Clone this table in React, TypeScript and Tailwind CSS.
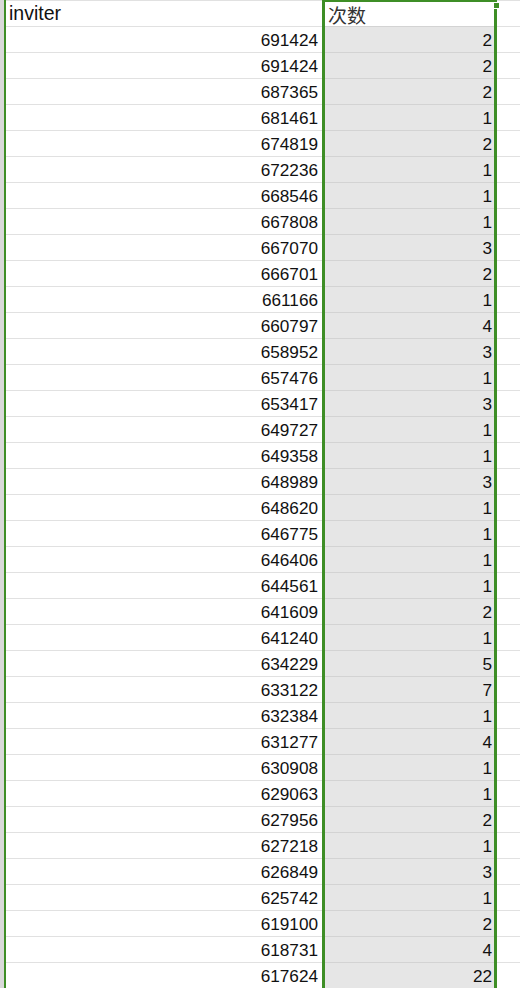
import React from "react";

const rows: [string, string][] = [
  ["691424", "2"],
  ["691424", "2"],
  ["687365", "2"],
  ["681461", "1"],
  ["674819", "2"],
  ["672236", "1"],
  ["668546", "1"],
  ["667808", "1"],
  ["667070", "3"],
  ["666701", "2"],
  ["661166", "1"],
  ["660797", "4"],
  ["658952", "3"],
  ["657476", "1"],
  ["653417", "3"],
  ["649727", "1"],
  ["649358", "1"],
  ["648989", "3"],
  ["648620", "1"],
  ["646775", "1"],
  ["646406", "1"],
  ["644561", "1"],
  ["641609", "2"],
  ["641240", "1"],
  ["634229", "5"],
  ["633122", "7"],
  ["632384", "1"],
  ["631277", "4"],
  ["630908", "1"],
  ["629063", "1"],
  ["627956", "2"],
  ["627218", "1"],
  ["626849", "3"],
  ["625742", "1"],
  ["619100", "2"],
  ["618731", "4"],
  ["617624", "22"],
];

export default function App() {
  return (
    <div
      className="relative w-[520px] h-[988px] overflow-hidden bg-white text-[#111]"
      style={{ fontFamily: '"Liberation Sans", Arial, sans-serif' }}
    >
      {/* header */}
      <div className="flex h-[26px]">
        <div className="w-[4px] bg-[#d9d9d9]" />
        <div className="w-[2px] bg-[#3e8e26]" />
        <div className="w-[316px] border-t border-[#e1e1e1] flex items-end pl-[3px] pb-[3px] text-[19.5px] leading-none">
          inviter
        </div>
        <div className="w-[3px] bg-[#3e8e26]" />
        <div
          className="w-[169px] border-t-2 border-[#3e8e26] flex items-end pl-[3px] pb-[2px] text-[19px] leading-none text-[#333]"
          style={{ fontFamily: '"Noto Sans CJK SC", "Liberation Sans", sans-serif' }}
        >
          次数
        </div>
        <div className="w-[3px] bg-[#3e8e26]" />
        <div className="flex-1 border-t border-[#e1e1e1]" />
      </div>
      {rows.map(([a, b], i) => (
        <div key={i} className="flex h-[26px]">
          <div className="w-[4px] bg-[#d9d9d9]" />
          <div className="w-[2px] bg-[#3e8e26]" />
          <div className="w-[316px] border-t border-[#e1e1e1] flex items-end justify-end pr-[4px] pb-[3px] text-[17.2px] leading-none">
            {a}
          </div>
          <div className="w-[3px] bg-[#3e8e26]" />
          <div className="w-[169px] bg-[#e6e6e6] border-t border-[#d3d3d3] flex items-end justify-end pr-[2px] pb-[3px] text-[17.2px] leading-none">
            {b}
          </div>
          <div className="w-[3px] bg-[#3e8e26]" />
          <div className="flex-1 border-t border-[#e1e1e1]" />
        </div>
      ))}
      {/* fill handle */}
      <div className="absolute left-[493px] top-[2px] w-[7px] h-[7px] border border-white bg-[#3e8e26]" />
    </div>
  );
}
